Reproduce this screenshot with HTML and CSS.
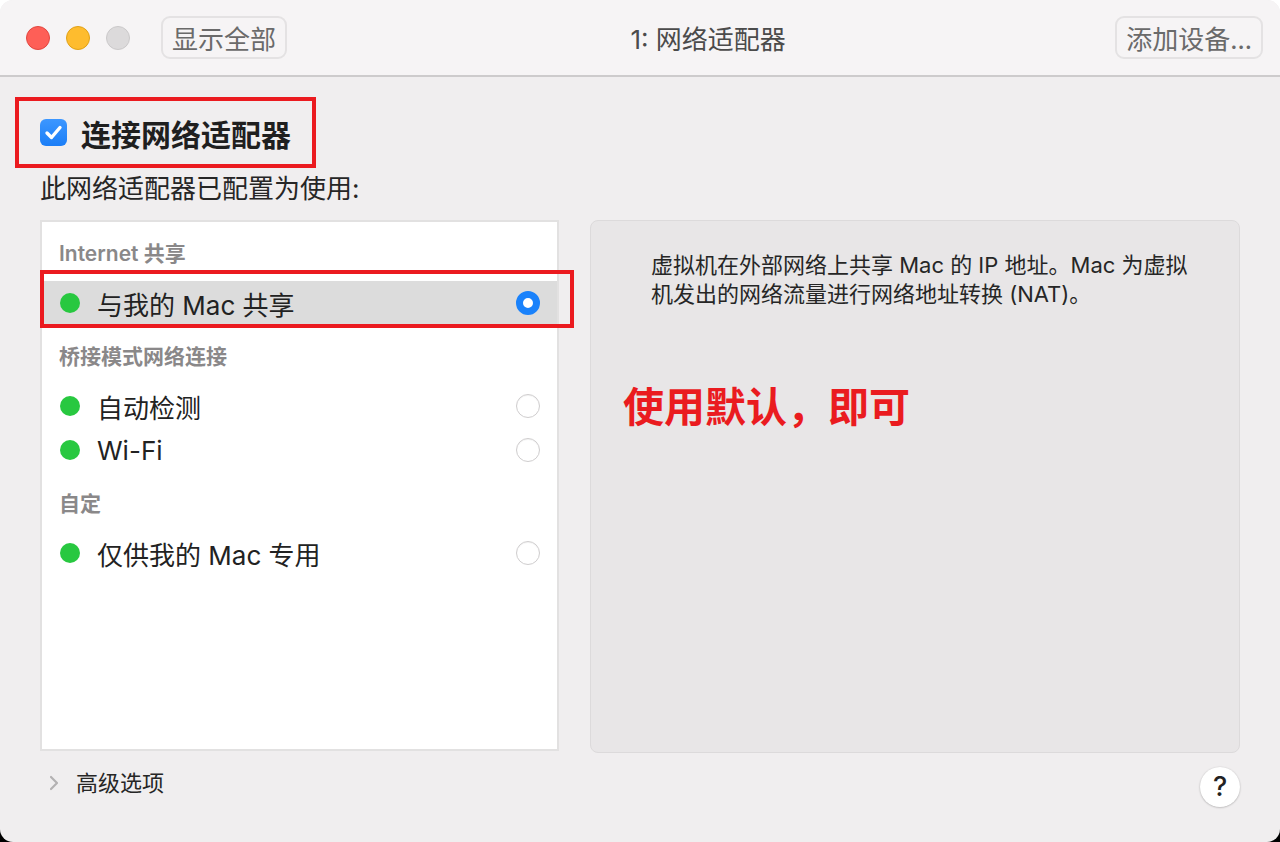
FILE: index.html
```html
<!DOCTYPE html>
<html lang="zh-CN">
<head>
<meta charset="utf-8">
<title>1: 网络适配器</title>
<link rel="stylesheet" href="styles.css">
</head>
<body>
<div class="window">
  <header class="titlebar">
    <div class="lights">
      <span class="light red"></span>
      <span class="light yellow"></span>
      <span class="light gray"></span>
    </div>
    <div class="tbtn show-all">显示全部</div>
    <div class="title">1: 网络适配器</div>
    <div class="tbtn">添加设备...</div>
  </header>

  <main class="content">
    <div class="connect-box">
      <span class="checkbox">
        <svg width="27" height="27" viewBox="0 0 27 27"><path d="M7 14 L11.5 18.5 L20 8.5" fill="none" stroke="#fff" stroke-width="3.4" stroke-linecap="round" stroke-linejoin="round"/></svg>
      </span>
      <span class="connect-label">连接网络适配器</span>
    </div>
    <div class="subtitle">此网络适配器已配置为使用:</div>

    <div class="panes">
      <div class="list">
        <div class="group-title first">Internet 共享</div>
        <div class="row selected">
          <span class="dot"></span><span class="row-label">与我的 Mac 共享</span><span class="radio on"></span>
          <span class="mark"></span>
        </div>
        <div class="group-title">桥接模式网络连接</div>
        <div class="row">
          <span class="dot"></span><span class="row-label">自动检测</span><span class="radio"></span>
        </div>
        <div class="row">
          <span class="dot"></span><span class="row-label">Wi-Fi</span><span class="radio"></span>
        </div>
        <div class="group-title">自定</div>
        <div class="row">
          <span class="dot"></span><span class="row-label">仅供我的 Mac 专用</span><span class="radio"></span>
        </div>
      </div>

      <div class="detail">
        <p class="desc">虚拟机在外部网络上共享 Mac 的 IP 地址。Mac 为虚拟<br>机发出的网络流量进行网络地址转换 (NAT)。</p>
        <p class="note">使用默认，即可</p>
      </div>
    </div>

    <footer class="footer">
      <div class="advanced">
        <svg class="chev" width="12" height="18" viewBox="0 0 12 18"><path d="M3 3 L9 9 L3 15" fill="none" stroke="#b3b1b2" stroke-width="2.2" stroke-linecap="round" stroke-linejoin="round"/></svg>
        <span>高级选项</span>
      </div>
      <div class="help">?</div>
    </footer>
  </main>
</div>
</body>
</html>
```

FILE: styles.css
```css
html {
  background: linear-gradient(#ffffff 0 50%, #000000 50% 100%);
}
body {
  margin: 0;
  font-family: Inter, "Noto Sans CJK SC", sans-serif;
  color: #242424;
}
.window {
  width: 1280px;
  height: 842px;
  border-radius: 13px;
  background: #f0eeef;
  overflow: hidden;
  display: flex;
  flex-direction: column;
  box-sizing: border-box;
}
.titlebar {
  height: 77px;
  flex: none;
  box-sizing: border-box;
  border-bottom: 2px solid #cdcbcc;
  background: #f6f4f5;
  display: flex;
  align-items: center;
  padding: 0 17px 0 26px;
}
.lights {
  display: flex;
  gap: 16px;
}
.light {
  width: 24px;
  height: 24px;
  border-radius: 50%;
  box-sizing: border-box;
}
.light.red { background: #fe5f57; border: 1px solid #e2463f; }
.light.yellow { background: #febc2e; border: 1px solid #e1a116; }
.light.gray { background: #dcdadb; border: 1px solid #cbc9ca; }
.tbtn {
  height: 43px;
  box-sizing: border-box;
  padding: 0 9px;
  border: 2px solid #e4e2e3;
  border-radius: 9px;
  font-size: 26px;
  line-height: 39px;
  color: #6a6a6a;
  font-family: "Noto Sans CJK SC", sans-serif;
}
.show-all {
  margin-left: 31px;
}
.title {
  flex: 1;
  text-align: center;
  font-size: 26px;
  color: #4b4b4b;
  padding-left: 14px;
}
.content {
  flex: 1;
  padding: 20px 40px 0 40px;
  display: flex;
  flex-direction: column;
  align-items: flex-start;
}
.connect-box {
  margin-left: -25px;
  height: 71px;
  box-sizing: border-box;
  border: 4px solid #eb1a1f;
  display: inline-flex;
  align-items: center;
  padding: 0 21px 0 21px;
  gap: 14px;
}
.checkbox {
  width: 27px;
  height: 27px;
  border-radius: 6px;
  background: linear-gradient(#3d97ff, #1b7ef7);
  display: block;
}
.checkbox svg { display: block; }
.connect-label {
  font-size: 30px;
  font-weight: 700;
  font-family: "Noto Sans CJK SC", sans-serif;
  color: #1f1f1f;
}
.subtitle {
  margin-top: 5px;
  font-size: 26px;
  line-height: 32px;
  color: #262626;
}
.panes {
  margin-top: 15px;
  display: flex;
  gap: 31px;
  width: 100%;
  height: 533px;
  flex: none;
}
.list {
  width: 519px;
  height: 531px;
  box-sizing: border-box;
  background: #ffffff;
  border: 2px solid #e2e1e1;
  padding-top: 12px;
  flex: none;
}
.group-title {
  height: 40px;
  line-height: 40px;
  margin: 12px 0 7px;
  padding-left: 17px;
  font-size: 21px;
  font-weight: 600;
  color: #8a8889;
}
.group-title.first { margin-top: 0; }
.row {
  position: relative;
  height: 44px;
  display: flex;
  align-items: center;
  padding: 0 17px 0 18px;
}
.row.selected { background: #dcdcdc; }
.dot {
  width: 20px;
  height: 20px;
  border-radius: 50%;
  background: #28c840;
  flex: none;
}
.row-label {
  flex: 1;
  margin-left: 17px;
  font-size: 26px;
  color: #222222;
}
.radio {
  width: 24px;
  height: 24px;
  border-radius: 50%;
  box-sizing: border-box;
  background: #ffffff;
  border: 1px solid #cfcdce;
  box-shadow: inset 0 1px 1px rgba(0,0,0,0.05);
  flex: none;
}
.radio.on {
  border: 7.5px solid #1a82fb;
  background: #ffffff;
  box-shadow: none;
}
.mark {
  position: absolute;
  top: -11px;
  left: -2px;
  right: -17px;
  bottom: -3px;
  border: 4px solid #eb1a1f;
  pointer-events: none;
}
.detail {
  flex: 1;
  box-sizing: border-box;
  background: #e8e6e7;
  border: 1px solid #dcdadb;
  border-radius: 8px;
  padding: 30px 20px 0 60px;
}
.desc {
  margin: 0;
  font-size: 22px;
  line-height: 29px;
  color: #262626;
}
.note {
  margin: 70px 0 0 -28px;
  font-size: 41px;
  line-height: 50px;
  font-weight: 700;
  color: #ea1b1f;
  font-family: "Noto Sans CJK SC", sans-serif;
}
.footer {
  width: 100%;
  display: flex;
  justify-content: space-between;
  align-items: flex-start;
}
.advanced {
  margin-top: 18px;
  display: flex;
  align-items: center;
  gap: 16px;
  font-size: 22px;
  line-height: 24px;
  color: #262626;
  padding-left: 8px;
}
.chev { display: block; }
.help {
  margin-top: 14px;
  width: 40px;
  height: 40px;
  border-radius: 50%;
  background: #ffffff;
  box-shadow: 0 0.5px 2px rgba(0,0,0,0.3);
  text-align: center;
  line-height: 40px;
  font-size: 27px;
  font-weight: 500;
  color: #222;
}
```
